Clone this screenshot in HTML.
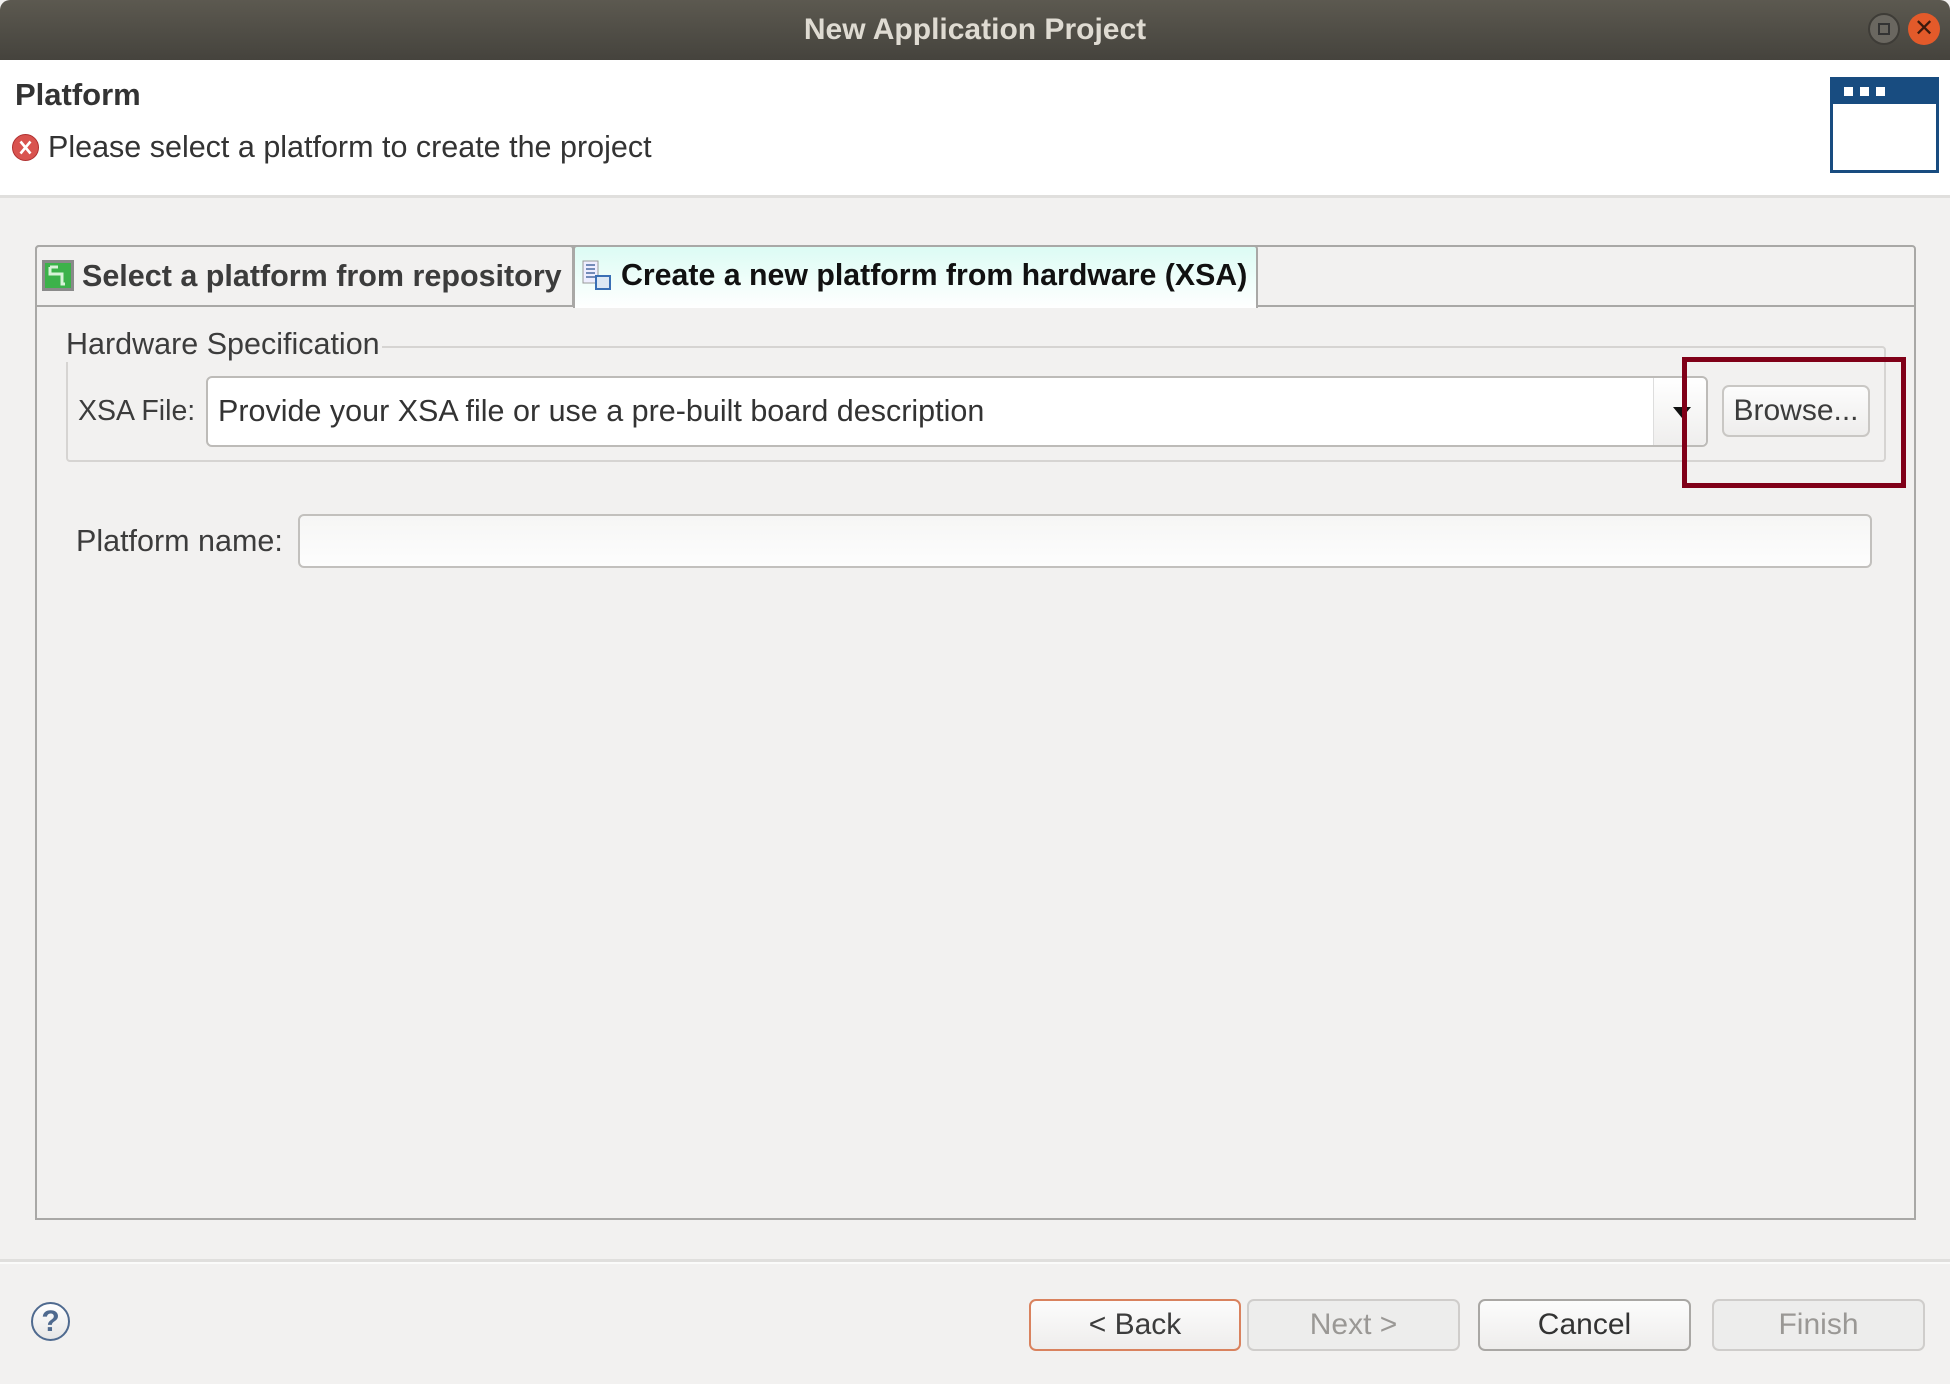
<!DOCTYPE html>
<html><head><meta charset="utf-8"><style>
*{box-sizing:border-box;margin:0;padding:0}
body{width:1950px;height:1384px;background:#f2f1f0;position:relative;overflow:hidden;font-family:"Liberation Sans","DejaVu Sans",sans-serif;color:#3c3c3c}
.a{position:absolute}
.title{left:0;top:0;width:1950px;height:60px;background:linear-gradient(#5c5950,#45433d);border-radius:10px 10px 0 0;color:#dfdbd2;font-weight:bold;font-size:30px;text-align:center;line-height:60px}
.hdr{left:0;top:60px;width:1950px;height:138px;background:#fff;border-bottom:3px solid #e0dfdd}
.btn{border:2px solid #c9c7c4;border-radius:7px;background:linear-gradient(#fcfcfc,#eeedec);font-size:30px;text-align:center;line-height:48px;height:52px}
.dis{background:#ededec;color:#9a9895;border-color:#cfcdcb}
</style></head><body>
<div class="a title">New Application Project</div>
<div class="a" style="left:1868px;top:13px;width:32px;height:32px;border-radius:50%;background:#6a6760;border:2px solid #3e3c37"><div class="a" style="left:8px;top:8px;width:12px;height:12px;border:2px solid #333"></div></div>
<div class="a" style="left:1908px;top:13px;width:32px;height:32px;border-radius:50%;background:#e35a2a;color:#3b1a0d;font-size:24px;line-height:31px;text-align:center">✕</div>
<div class="a hdr"></div>
<div class="a" style="left:15px;top:77px;font-size:31px;font-weight:bold;color:#333">Platform</div>
<svg class="a" style="left:11px;top:133px" width="29" height="29" viewBox="0 0 29 29"><circle cx="14.5" cy="14.5" r="13" fill="#d9534f" stroke="#b03030"/><path d="M9.5 8.5l10 12M19.5 8.5l-10 12" stroke="#fff" stroke-width="2.6"/></svg>
<div class="a" style="left:48px;top:130px;font-size:30.5px;color:#333">Please select a platform to create the project</div>
<div class="a" style="left:1830px;top:77px;width:109px;height:96px;border:3px solid #184c80;background:#fff"><div style="height:24px;background:#184c80;position:relative"><span class="a" style="left:11px;top:7px;width:9px;height:9px;background:#fff"></span><span class="a" style="left:27px;top:7px;width:9px;height:9px;background:#fff"></span><span class="a" style="left:43px;top:7px;width:9px;height:9px;background:#fff"></span></div></div>

<div class="a" style="left:35px;top:245px;width:1881px;height:975px;border:2px solid #a9a8a6;border-radius:4px 4px 0 0"></div>
<div class="a" style="left:35px;top:305px;width:1881px;height:2px;background:#a9a8a6"></div>
<div class="a" style="left:35px;top:245px;width:539px;height:62px;border:2px solid #a9a8a6;border-radius:4px 4px 0 0"></div>
<div class="a" style="left:42px;top:260px;width:32px;height:31px;background:#3cb24a;border:3px solid #8a8a8a"><svg width="26" height="25" viewBox="0 0 26 25"><path d="M5 4v7h12v10h3" fill="none" stroke="#d8f3d8" stroke-width="3"/><path d="M5 4h8" stroke="#d8f3d8" stroke-width="3"/></svg></div>
<div class="a" style="left:82px;top:259px;font-size:30.5px;font-weight:bold;color:#3c3c3c">Select a platform from repository</div>
<div class="a" style="left:573px;top:245px;width:685px;height:63px;border:2px solid #a9a8a6;border-bottom:none;border-radius:4px 4px 0 0;background:linear-gradient(#dcfcf4,#fff)"></div>
<svg class="a" style="left:582px;top:260px" width="32" height="32" viewBox="0 0 32 32"><rect x="1" y="1" width="15" height="22" fill="#eef" stroke="#999"/><path d="M4 5h9M4 9h9M4 13h9M4 17h9" stroke="#4a6aa0" stroke-width="1.5"/><rect x="14" y="16" width="14" height="13" fill="#dde8f4" stroke="#3a6fb5" stroke-width="2"/></svg>
<div class="a" style="left:621px;top:259px;font-size:30.3px;font-weight:bold;color:#111">Create a new platform from hardware (XSA)</div>

<div class="a" style="left:66px;top:346px;width:1820px;height:116px;border:2px solid #d6d4d2;border-radius:4px"></div>
<div class="a" style="left:64px;top:327px;padding:0 2px 0 2px;background:#f2f1f0;font-size:30.5px;color:#3c3c3c">Hardware Specification</div>
<div class="a" style="left:78px;top:395px;font-size:28.5px">XSA File:</div>
<div class="a" style="left:206px;top:376px;width:1502px;height:71px;border:2px solid #bdbbb8;border-radius:6px;background:#fff"></div>
<div class="a" style="left:1653px;top:378px;width:53px;height:67px;border-left:1px solid #ddd;background:linear-gradient(#fff,#efeeed);border-radius:0 5px 5px 0"></div>
<div class="a" style="left:1673px;top:407px;width:0;height:0;border-left:9px solid transparent;border-right:9px solid transparent;border-top:11px solid #111"></div>
<div class="a" style="left:218px;top:394px;font-size:30.5px;color:#333">Provide your XSA file or use a pre-built board description</div>
<div class="a btn" style="left:1722px;top:385px;width:148px;color:#3c3c3c">Browse...</div>
<div class="a" style="left:1682px;top:357px;width:224px;height:131px;border:5px solid #800018"></div>

<div class="a" style="left:76px;top:524px;font-size:30.5px">Platform name:</div>
<div class="a" style="left:298px;top:514px;width:1574px;height:54px;border:2px solid #c2c0bd;border-radius:6px;background:linear-gradient(#f6f6f5,#fdfdfd)"></div>

<div class="a" style="left:0;top:1259px;width:1950px;height:3px;background:#e0dfdd"></div>
<div class="a" style="left:0;top:1262px;width:1950px;height:2px;background:#fbfbfa"></div>
<div class="a" style="left:31px;top:1302px;width:39px;height:39px;border-radius:50%;border:2px solid #4f6a8f;background:linear-gradient(#fff,#e6e6e6);color:#4f6a8f;font-weight:bold;font-size:30px;line-height:35px;text-align:center">?</div>

<div class="a btn" style="left:1029px;top:1299px;width:212px;border-color:#d9825e">&lt; Back</div>
<div class="a btn dis" style="left:1247px;top:1299px;width:213px">Next &gt;</div>
<div class="a btn" style="left:1478px;top:1299px;width:213px;border-color:#a9a7a4;color:#333">Cancel</div>
<div class="a btn dis" style="left:1712px;top:1299px;width:213px">Finish</div>
</body></html>
